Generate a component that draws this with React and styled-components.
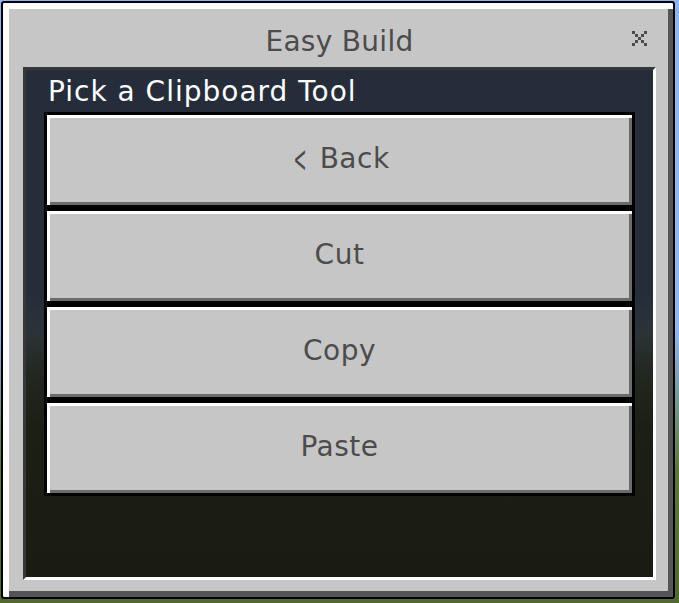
import React from 'react'
import styled, { createGlobalStyle } from 'styled-components'

const GlobalStyle = createGlobalStyle`
  html, body {
    margin: 0;
    padding: 0;
    overflow: hidden;
  }

  body {
    background: linear-gradient(#8db5f5 0%, #8db5f5 55%, #5a7a30 78%, #4e6c28 100%);
    font-family: "DejaVu Sans", "Noto Sans", sans-serif;
  }
`

const Screen = styled.div`
  width: 679px;
  height: 603px;
  padding: 1px 0 0 1px;
  box-sizing: border-box;
`

const Window = styled.div`
  width: 674px;
  height: 598px;
  box-sizing: border-box;
  border: 2px solid #000;
  border-radius: 3px;
  background: #c6c6c6;
  box-shadow: inset 6px 6px 0 #fff, inset -5px -6px 0 #555;
  padding: 0 17px 17px 20px;
  display: flex;
  flex-direction: column;
`

const TitleBar = styled.div`
  height: 64px;
  display: grid;
  grid-template-columns: 1fr auto 1fr;
  align-items: center;
`

const Title = styled.div`
  grid-column: 2;
  font-size: 28px;
  letter-spacing: 0.3px;
  color: #4c4c4c;
  padding-top: 13px;
`

const CloseButton = styled.button`
  grid-column: 3;
  justify-self: end;
  margin-right: 9px;
  margin-top: 6px;
  padding: 0;
  border: none;
  background: none;
  width: 15px;
  height: 15px;
  display: flex;
  cursor: pointer;
`

const Panel = styled.div`
  flex: 1;
  border-style: solid;
  border-width: 3px;
  border-color: #373737 #fff #fff #373737;
  background: linear-gradient(
    #252d3a 0%,
    #252d3a 44%,
    #2c3337 52%,
    #22271f 60%,
    #1c1f16 70%,
    #1a1c13 100%
  );
  display: flex;
  flex-direction: column;
`

const Heading = styled.div`
  height: 42px;
  display: flex;
  align-items: center;
  padding-left: 22px;
  padding-top: 1px;
  box-sizing: border-box;
  color: #fff;
  font-size: 28px;
  letter-spacing: 1px;
`

const ButtonList = styled.div`
  display: flex;
  flex-direction: column;
  margin: 0 18px;
`

const ToolButton = styled.button`
  height: 96px;
  box-sizing: border-box;
  border: 3px solid #000;
  background: #c6c6c6;
  box-shadow: inset 3px 3px 0 #fff, inset -3px -3px 0 #6b6b6b;
  color: #4c4c4c;
  font-family: inherit;
  font-size: 28px;
  letter-spacing: 0.5px;
  display: flex;
  align-items: center;
  justify-content: center;
  padding: 0 0 3px 0;
  cursor: pointer;
`

const Chevron = styled.span`
  display: inline-block;
  font-size: 26px;
  transform: scale(0.6, 1.45);
  margin-right: 8px;
`

const pixels = [
  [0, 0], [4, 0], [1, 1], [3, 1], [2, 2], [1, 3], [3, 3], [0, 4], [4, 4],
]

const CloseIcon = () => (
  <svg width="15" height="15" viewBox="0 0 15 15" shapeRendering="crispEdges">
    {pixels.map(([x, y]) => (
      <rect key={`${x}-${y}`} x={x * 3} y={y * 3} width="3" height="3" fill="#4c4c4c" />
    ))}
  </svg>
)

const tools = ['Cut', 'Copy', 'Paste']

export default function App() {
  return (
    <Screen>
      <GlobalStyle />
      <Window>
        <TitleBar>
          <Title>Easy Build</Title>
          <CloseButton aria-label="Close">
            <CloseIcon />
          </CloseButton>
        </TitleBar>
        <Panel>
          <Heading>Pick a Clipboard Tool</Heading>
          <ButtonList>
            <ToolButton>
              <Chevron>&lt;</Chevron>
              Back
            </ToolButton>
            {tools.map((t) => (
              <ToolButton key={t}>{t}</ToolButton>
            ))}
          </ButtonList>
        </Panel>
      </Window>
    </Screen>
  )
}
